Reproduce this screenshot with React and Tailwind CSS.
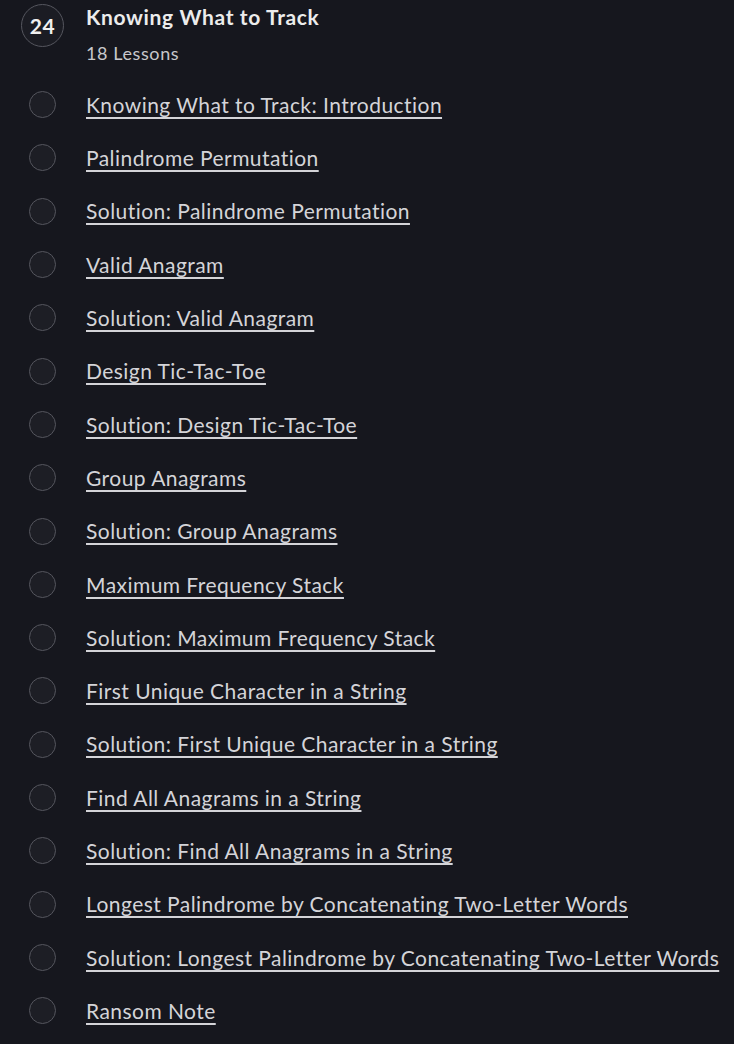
import React from "react";

const lessons = [
  "Knowing What to Track: Introduction",
  "Palindrome Permutation",
  "Solution: Palindrome Permutation",
  "Valid Anagram",
  "Solution: Valid Anagram",
  "Design Tic-Tac-Toe",
  "Solution: Design Tic-Tac-Toe",
  "Group Anagrams",
  "Solution: Group Anagrams",
  "Maximum Frequency Stack",
  "Solution: Maximum Frequency Stack",
  "First Unique Character in a String",
  "Solution: First Unique Character in a String",
  "Find All Anagrams in a String",
  "Solution: Find All Anagrams in a String",
  "Longest Palindrome by Concatenating Two-Letter Words",
  "Solution: Longest Palindrome by Concatenating Two-Letter Words",
  "Ransom Note",
];

export default function App() {
  return (
    <div
      className="w-[734px] h-[1044px] overflow-hidden bg-[#16171e] text-[#d4d4d8]"
      style={{ fontFamily: "Lato, 'Noto Sans', sans-serif" }}
    >
      <div className="flex h-[78px]">
        <div className="w-[85px] flex justify-center pt-1">
          <div className="w-[43px] h-[43px] rounded-full border border-[#55565e] bg-[#1b1c23] flex items-center justify-center text-[21px] font-bold tracking-[0.5px] text-[#f0f0f0]">
            24
          </div>
        </div>
        <div className="flex flex-col pl-[1px]">
          <div className="text-[21px] font-bold tracking-[0.65px] text-[#ececec] leading-[34px]">
            Knowing What to Track
          </div>
          <div className="mt-[1px] text-[18px] tracking-[0.6px] text-[#c8c8cc] leading-[36px]">
            18 Lessons
          </div>
        </div>
      </div>
      {lessons.map((l) => (
        <div key={l} className="flex items-center h-[53.3px]">
          <div className="w-[85px] flex justify-center">
            <div className="w-[27px] h-[27px] rounded-full border border-[#55565e] bg-[#1d1e25]" />
          </div>
          <a className="pl-[1px] text-[21px] tracking-[0.45px] underline underline-offset-[4px] decoration-[2px] whitespace-nowrap text-[#d4d4d8]">
            {l}
          </a>
        </div>
      ))}
    </div>
  );
}
